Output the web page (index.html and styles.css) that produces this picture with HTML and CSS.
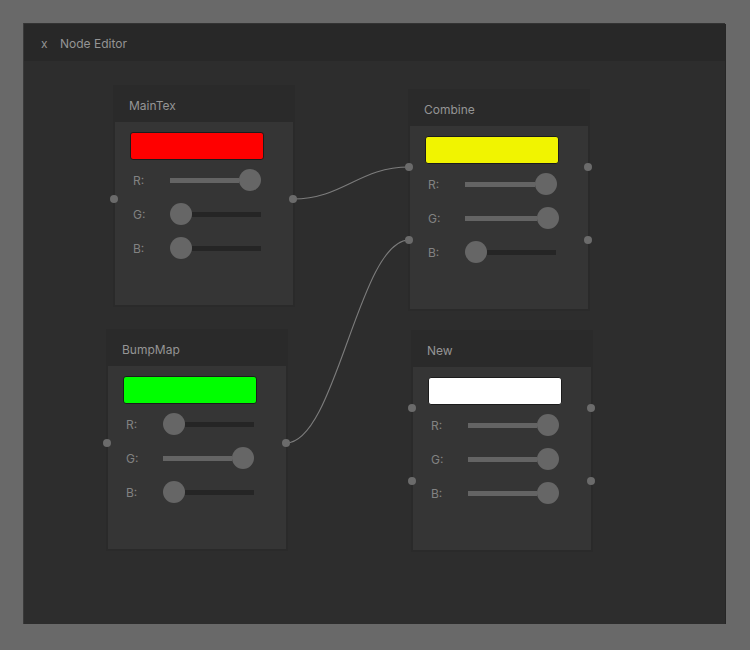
FILE: index.html
```html
<!DOCTYPE html>
<html>
<head>
<meta charset="utf-8">
<title>Node Editor</title>
<link rel="stylesheet" href="styles.css">
</head>
<body>
<div class="window">
  <div class="titlebar"><span class="close">x</span><span class="title">Node Editor</span></div>
  <div class="canvas">
    <svg class="wires" width="701" height="563" viewBox="0 0 701 563">
      <path d="M269 138 C319 138 335 106 385 106"/>
      <path d="M262 382 C312 382 335 179 385 179"/>
    </svg>

    <div class="node n-maintex">
      <div class="node-header">MainTex</div>
      <div class="node-body">
        <div class="swatch" style="background:#ff0000"></div>
        <div class="row"><span class="label">R:</span><div class="slider"><div class="fill" style="width:69px"></div><div class="thumb"></div><div class="rest"></div></div></div>
        <div class="row"><span class="label">G:</span><div class="slider"><div class="fill" style="width:0px"></div><div class="thumb"></div><div class="rest"></div></div></div>
        <div class="row"><span class="label">B:</span><div class="slider"><div class="fill" style="width:0px"></div><div class="thumb"></div><div class="rest"></div></div></div>
      </div>
      <span class="port port-left port-mid"></span>
      <span class="port port-right port-mid"></span>
    </div>

    <div class="node n-combine">
      <div class="node-header">Combine</div>
      <div class="node-body">
        <div class="swatch" style="background:#f1f400"></div>
        <div class="row"><span class="label">R:</span><div class="slider"><div class="fill" style="width:70px"></div><div class="thumb"></div><div class="rest"></div></div></div>
        <div class="row"><span class="label">G:</span><div class="slider"><div class="fill" style="width:72px"></div><div class="thumb"></div><div class="rest"></div></div></div>
        <div class="row"><span class="label">B:</span><div class="slider"><div class="fill" style="width:0px"></div><div class="thumb"></div><div class="rest"></div></div></div>
      </div>
      <span class="port port-left port-top"></span>
      <span class="port port-left port-bottom"></span>
      <span class="port port-right port-top"></span>
      <span class="port port-right port-bottom"></span>
    </div>

    <div class="node n-bumpmap">
      <div class="node-header">BumpMap</div>
      <div class="node-body">
        <div class="swatch" style="background:#00ff00"></div>
        <div class="row"><span class="label">R:</span><div class="slider"><div class="fill" style="width:0px"></div><div class="thumb"></div><div class="rest"></div></div></div>
        <div class="row"><span class="label">G:</span><div class="slider"><div class="fill" style="width:69px"></div><div class="thumb"></div><div class="rest"></div></div></div>
        <div class="row"><span class="label">B:</span><div class="slider"><div class="fill" style="width:0px"></div><div class="thumb"></div><div class="rest"></div></div></div>
      </div>
      <span class="port port-left port-mid"></span>
      <span class="port port-right port-mid"></span>
    </div>

    <div class="node n-new">
      <div class="node-header">New</div>
      <div class="node-body">
        <div class="swatch" style="background:#ffffff"></div>
        <div class="row"><span class="label">R:</span><div class="slider"><div class="fill" style="width:69px"></div><div class="thumb"></div><div class="rest"></div></div></div>
        <div class="row"><span class="label">G:</span><div class="slider"><div class="fill" style="width:69px"></div><div class="thumb"></div><div class="rest"></div></div></div>
        <div class="row"><span class="label">B:</span><div class="slider"><div class="fill" style="width:69px"></div><div class="thumb"></div><div class="rest"></div></div></div>
      </div>
      <span class="port port-left port-top"></span>
      <span class="port port-left port-bottom"></span>
      <span class="port port-right port-top"></span>
      <span class="port port-right port-bottom"></span>
    </div>
  </div>
</div>
</body>
</html>
```

FILE: styles.css
```css
* { box-sizing: border-box; }

html, body {
  margin: 0;
  padding: 0;
  background: #696969;
  font-family: "Inter", "Roboto", "Liberation Sans", sans-serif;
  font-size: 12px;
}

body {
  padding: 23px 0 0 24px;
}

.window {
  width: 701px;
  height: 601px;
  background: #2d2d2d;
  display: flex;
  flex-direction: column;
  border-top: 1px solid #333333;
  box-shadow: -1px 0 0 #3a3a3a, 1px 1px 0 #262626;
}

.titlebar {
  height: 37px;
  flex: none;
  background: #282828;
  display: flex;
  align-items: center;
  padding: 1px 0 0 17px;
  color: #949494;
}

.close {
  width: 19px;
}

.canvas {
  position: relative;
  flex: 1;
  overflow: hidden;
}

.wires {
  position: absolute;
  left: 0;
  top: 0;
}

.wires path {
  fill: none;
  stroke: #7c7c7c;
  stroke-width: 1.1;
}

.node {
  position: absolute;
  width: 182px;
  height: 222px;
  background: #2a2a2a;
  padding: 0 2px 2px;
  display: flex;
  flex-direction: column;
}

.n-maintex { left: 89px; top: 24px; }
.n-combine { left: 384px; top: 28px; }
.n-bumpmap { left: 82px; top: 268px; }
.n-new { left: 387px; top: 269px; }

.node-header {
  height: 37px;
  flex: none;
  display: flex;
  align-items: center;
  padding: 3px 0 0 14px;
  color: #959595;
}

.node-body {
  flex: 1;
  background: #353535;
  padding: 10px 0 0 15px;
}

.swatch {
  width: 134px;
  height: 28px;
  border: 1px solid #1c1c1c;
  border-radius: 3px;
  margin-bottom: 3px;
}

.row {
  height: 34px;
  display: flex;
  align-items: center;
  padding-left: 3px;
}

.label {
  width: 37px;
  flex: none;
  color: #828282;
}

.slider {
  width: 91px;
  height: 22px;
  display: flex;
  align-items: center;
  flex: none;
}

.fill {
  height: 5px;
  background: #646464;
  flex: none;
}

.thumb {
  width: 22px;
  height: 22px;
  border-radius: 50%;
  background: #666666;
  flex: none;
}

.rest {
  flex: 1;
  height: 5px;
  background: #252525;
}

.port {
  position: absolute;
  width: 8px;
  height: 8px;
  border-radius: 50%;
  background: #6b6b6b;
}

.port-left { left: -3px; }
.port-right { right: -2px; }
.port-mid { top: 110px; }
.port-top { top: 74px; }
.port-bottom { top: 147px; }
```
